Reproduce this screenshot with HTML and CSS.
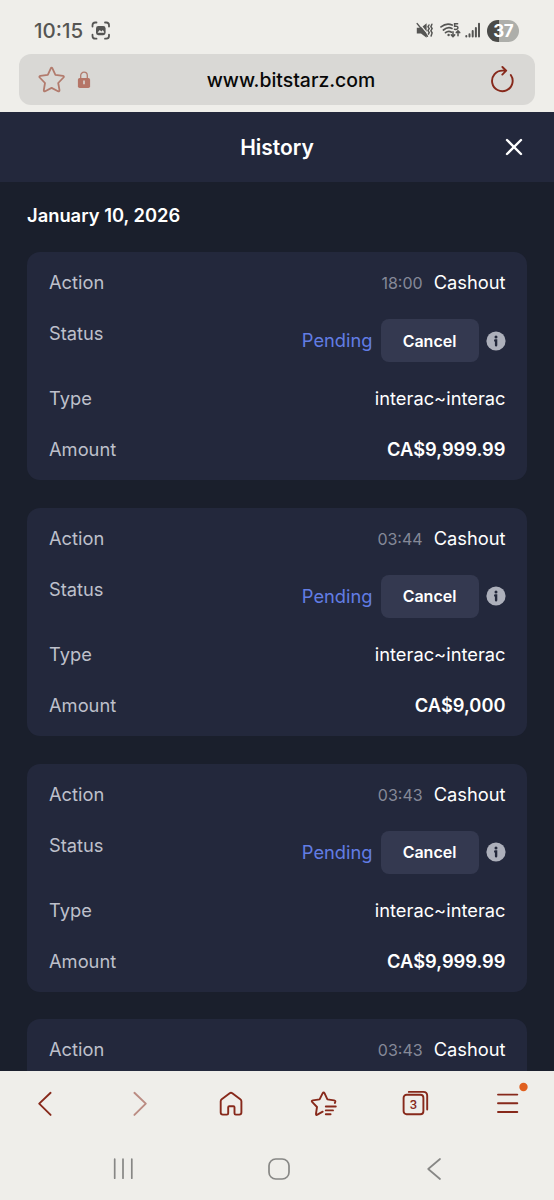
FILE: index.html
```html
<!DOCTYPE html>
<html lang="en">
<head>
<meta charset="utf-8">
<title>History</title>
<link rel="stylesheet" href="styles.css">
</head>
<body>
<div class="phone">
  <div class="statusbar">
    <span class="clock">10:15</span>
    <svg class="shot" width="20" height="20" viewBox="0 0 20 20" fill="none" stroke="#555553" stroke-width="1.8" stroke-linecap="round"><path d="M1.5 5.5V4.2Q1.5 1.5 4.2 1.5H5.5M14 1.5h1.3Q18 1.5 18 4.2V5.5M18 13.7V15Q18 17.7 15.3 17.7H14M5.5 17.7H4.2Q1.5 17.7 1.5 15V13.7"/><rect x="5" y="5" width="9.6" height="9.2" rx="2.4" fill="#555553" stroke="none"/><path d="M6.8 11.2 8.8 9l1.6 1.4L11.8 9l1.3 2.1v.6H6.8z" fill="#efeeea" stroke="none"/></svg>
    <svg class="mute" width="18" height="18" viewBox="0 0 18 18" fill="none" stroke="#555553" stroke-width="1.5" stroke-linecap="round"><path d="M.8 5.8H5l5.6-4.6v14.6L5 11.6H.8z" fill="#555553" stroke="none"/><path d="M2.4.4 12.4 12.6" stroke="#efeeea" stroke-width="1.3"/><path d="M1.2 1.6 11.4 14.2M13 3l-1 1.8 1.2 1.8-1.2 2 1.2 2-.8 1.6M15.9 2.2l-1 2.4 1.2 2-1.2 2.1 1.2 2.2-1 3.1"/></svg>
    <svg class="wifi" width="21" height="18" viewBox="0 0 21 18" fill="none" stroke="#555553" stroke-width="1.7" stroke-linecap="round"><path d="M1 4.9Q6.5.4 12.2 3M3.4 8Q7.8 4.4 12 6.4M5.5 10.7Q8.5 8.3 11.5 10.2"/><circle cx="8.6" cy="13" r="1.2" fill="#555553" stroke="none"/><path d="M17.6 1.8h-3v2.5q3.3-.5 3.3 1.5t-3.4 1.5M13 9.8v4.8m-1.7-1.7 1.7 1.7 1.7-1.7M18 13.8V9m-1.7 1.6L18 8.8l1.7 1.8" stroke-width="1.5"/></svg>
    <svg class="signal" width="16" height="18" viewBox="0 0 16 18" stroke="#555553" stroke-width="2" stroke-linecap="round"><path d="M1.3 14v.5M4.5 12.3v2.2M7.7 9.1v5.4M10.9 5.9v8.6M14 1.8v12.7"/></svg>
    <span class="battery">37</span>
  </div>
  <div class="urlbar">
    <svg class="star" width="28" height="28" viewBox="0 0 28 28" fill="none" stroke="#b27b6d" stroke-width="1.8" stroke-linejoin="round"><path d="M12.8 2.3Q13.6.9 14.4 2.3L17.4 8.8 25 9.9Q26.5 10.3 25.5 11.5L20.2 17 21.5 24.2Q21.5 25.8 20 25.2L13.6 21.9 7.2 25.2Q5.7 25.8 5.8 24.2L7 17 1.7 11.5Q.8 10.3 2.3 9.9L9.8 8.8z"/></svg>
    <svg class="lock" width="14" height="18" viewBox="0 0 14 18"><path d="M3.7 8V4.5a3.3 3.3 0 0 1 6.6 0V8" fill="none" stroke="#b27b6d" stroke-width="1.3"/><rect x=".9" y="7" width="12.2" height="10" rx="1.8" fill="#b57567"/><path d="M7 9.6v3.6" stroke="#d9d8d5" stroke-width="1.6"/></svg>
    <span class="address">www.bitstarz.com</span>
    <svg class="reload" width="26" height="28" viewBox="0 0 26 28" fill="none" stroke="#87291b" stroke-width="1.9" stroke-linecap="round" stroke-linejoin="round"><path d="M21.8 9A10.3 10.3 0 1 1 13.4 4.6H16.6M13.4 1 17.2 4.7 13.3 8.6"/></svg>
  </div>
  <header class="header">
    <h1 class="title">History</h1>
    <svg class="close" width="18" height="18" viewBox="0 0 18 18" stroke="#fff" stroke-width="2.4" stroke-linecap="round"><path d="m2 2 14 14M16 2 2 16"/></svg>
  </header>
  <main class="content">
    <h2 class="date">January 10, 2026</h2>
    <div class="cards">
      <section class="card">
        <div class="row"><span class="label">Action</span><span class="value"><span class="time">18:00</span>Cashout</span></div>
        <div class="row status"><span class="label">Status</span><span class="state"><span class="pending">Pending</span><button class="cancel">Cancel</button><svg class="info" width="20" height="20" viewBox="0 0 20 20"><circle cx="10" cy="10" r="9.6" fill="#adb0bb"/><circle cx="10" cy="5.9" r="1.5" fill="#23283b"/><path d="M9.2 9.5h.9v4.8" fill="none" stroke="#23283b" stroke-width="2.4" stroke-linecap="round"/></svg></span></div>
        <div class="row"><span class="label">Type</span><span class="value">interac~interac</span></div>
        <div class="row"><span class="label">Amount</span><span class="value amount">CA$9,999.99</span></div>
      </section>
      <section class="card">
        <div class="row"><span class="label">Action</span><span class="value"><span class="time">03:44</span>Cashout</span></div>
        <div class="row status"><span class="label">Status</span><span class="state"><span class="pending">Pending</span><button class="cancel">Cancel</button><svg class="info" width="20" height="20" viewBox="0 0 20 20"><circle cx="10" cy="10" r="9.6" fill="#adb0bb"/><circle cx="10" cy="5.9" r="1.5" fill="#23283b"/><path d="M9.2 9.5h.9v4.8" fill="none" stroke="#23283b" stroke-width="2.4" stroke-linecap="round"/></svg></span></div>
        <div class="row"><span class="label">Type</span><span class="value">interac~interac</span></div>
        <div class="row"><span class="label">Amount</span><span class="value amount">CA$9,000</span></div>
      </section>
      <section class="card">
        <div class="row"><span class="label">Action</span><span class="value"><span class="time">03:43</span>Cashout</span></div>
        <div class="row status"><span class="label">Status</span><span class="state"><span class="pending">Pending</span><button class="cancel">Cancel</button><svg class="info" width="20" height="20" viewBox="0 0 20 20"><circle cx="10" cy="10" r="9.6" fill="#adb0bb"/><circle cx="10" cy="5.9" r="1.5" fill="#23283b"/><path d="M9.2 9.5h.9v4.8" fill="none" stroke="#23283b" stroke-width="2.4" stroke-linecap="round"/></svg></span></div>
        <div class="row"><span class="label">Type</span><span class="value">interac~interac</span></div>
        <div class="row"><span class="label">Amount</span><span class="value amount">CA$9,999.99</span></div>
      </section>
      <section class="card">
        <div class="row"><span class="label">Action</span><span class="value"><span class="time">03:43</span>Cashout</span></div>
      </section>
    </div>
  </main>
  <nav class="toolbar">
    <svg width="28" height="28" viewBox="0 0 28 28"><path d="M18.6 2.8 7.2 13.6 18.6 24.9"/></svg>
    <svg class="faded" width="28" height="28" viewBox="0 0 28 28"><path d="M10.4 2.8 21.8 13.6 10.4 24.9"/></svg>
    <svg width="28" height="28" viewBox="0 0 28 28"><path d="M3.7 11.2Q3.7 10 4.7 9.2L12.7 3.2Q14 2.2 15.3 3.2L23.3 9.2Q24.4 10 24.4 11.2V22.5Q24.4 24.6 22.3 24.6H18.8Q17.5 24.6 17.5 23.3V17.3Q17.5 16.2 16.4 16.2H12.3Q11.2 16.2 11.2 17.3V23.3Q11.2 24.6 9.9 24.6H5.8Q3.7 24.6 3.7 22.5z"/></svg>
    <svg width="28" height="28" viewBox="-.8 0 28 28"><path d="M25 13 25.4 12.2Q26 10.7 24.4 10.4L17.6 9.4 14.7 3.2Q13.8 1.5 12.9 3.2L9.8 9.4 3 10.4Q1.2 10.8 2.5 12.2L7.2 17 6.2 23.7Q6 25.6 7.6 24.7L12.9 21.7M16 16.5h10M16 20.4h7.2M16 24.3h4.8"/></svg>
    <svg width="28" height="28" viewBox="1.2 0 28 28"><rect x="2.8" y="4.8" width="19.8" height="19.4" rx="3"/><path d="M8 1.9H22.5Q26.4 1.9 26.4 5.8V19.6"/><text x="12.6" y="19.3">3</text></svg>
    <svg class="menu" width="28" height="28" viewBox="0 0 28 28"><path d="M4 4.6H23.3M4 13.3H23.3M4 22H23.3"/><circle cx="29.5" cy="-3" r="4.2"/></svg>
  </nav>
  <div class="sysnav">
    <svg width="24" height="24" viewBox="0 0 24 24"><path d="M3.7 2.2v19M12 2.2v19M20.8 2.2v19"/></svg>
    <svg width="24" height="24" viewBox="0 0 24 24"><rect x="2" y="2" width="20" height="20" rx="6.8"/></svg>
    <svg width="24" height="24" viewBox="0 0 24 24"><path d="M18 2 6.2 12 18 22"/></svg>
  </div>
</div>
</body>
</html>
```
FILE: styles.css
```css
* { box-sizing: border-box; }
body { margin: 0; font-family: Inter, "Liberation Sans", sans-serif; }
svg { display: block; flex: none; overflow: visible; }
.phone { width: 554px; height: 1200px; display: flex; flex-direction: column; overflow: hidden; background: #efeeea; }

.statusbar { flex: none; height: 54px; display: flex; align-items: center; padding: 7px 35px 0 34px; }
.clock { width: 58px; font-size: 20.5px; font-weight: 500; color: #555553; white-space: nowrap; }
.mute { margin-left: 305px; }
.wifi { margin-left: 6px; }
.signal { margin-left: 4px; }
.battery { width: 32px; height: 22px; margin-left: 6px; border-radius: 11px; background: linear-gradient(90deg, #4b4b49 37%, #adaeaa 37%); color: #fff; font-size: 17px; font-weight: 700; line-height: 22px; text-align: center; letter-spacing: -.5px; }

.urlbar { flex: none; height: 51px; margin: 0 19px 7px; padding: 0 20px 0 19px; border-radius: 12px; background: #d9d8d5; display: flex; align-items: center; }
.lock { margin-left: 11px; }
.address { flex: 1; margin-left: 2px; text-align: center; font-size: 19.4px; font-weight: 500; color: #080808; }

.header { flex: none; height: 70px; background: #23283c; display: grid; grid-template-columns: 1fr auto 1fr; align-items: center; }
.title { grid-column: 2; margin: 0; font-size: 21px; font-weight: 600; color: #fff; }
.close { justify-self: end; margin-right: 31px; }

.content { flex: 1; min-height: 0; overflow: hidden; padding: 20px 27px 0; background: #1a1f2c; }
.date { margin: 0 0 23px; font-size: 18.35px; line-height: 27px; font-weight: 600; color: #fff; }
.cards { display: flex; flex-direction: column; gap: 27.8px; }
.card { height: 228px; padding: 17px 21.5px 0 22px; border-radius: 13px; background: #23283c; display: flex; flex-direction: column; gap: 24px; }
.row { height: 27px; flex: none; display: flex; justify-content: space-between; font-size: 18.3px; line-height: 27px; }
.status { height: 41px; }
.label { color: #bec0cb; }
.value { color: #fff; }
.amount { font-weight: 600; }
.time { margin-right: 11px; font-size: 16px; color: #858998; }
.state { display: flex; align-items: center; }
.pending { color: #627de4; }
.cancel { width: 98px; height: 43px; margin: 0 7px 0 8px; padding: 0; border: 0; border-radius: 8px; background: #343950; color: #fff; font: 600 16px Inter, "Liberation Sans", sans-serif; }

.toolbar { flex: none; height: 65px; padding: 0 32px; display: grid; grid-template-columns: 28px 28px 28px 28px 28px 28px; justify-content: space-between; align-items: center; background: #efeeea; }
.toolbar path, .toolbar rect { fill: none; stroke: #87291b; stroke-width: 1.9; stroke-linecap: round; stroke-linejoin: round; }
.toolbar text { fill: #87291b; font: 500 13px Roboto, sans-serif; text-anchor: middle; }
.faded { opacity: .5; }
.menu circle { fill: #e0601f; }

.sysnav { flex: none; height: 64px; padding: 1px 108px 0 111px; display: flex; justify-content: space-between; align-items: center; background: #efeeea; }
.sysnav path, .sysnav rect { fill: none; stroke: #878785; stroke-width: 1.7; stroke-linecap: round; stroke-linejoin: round; }
```
